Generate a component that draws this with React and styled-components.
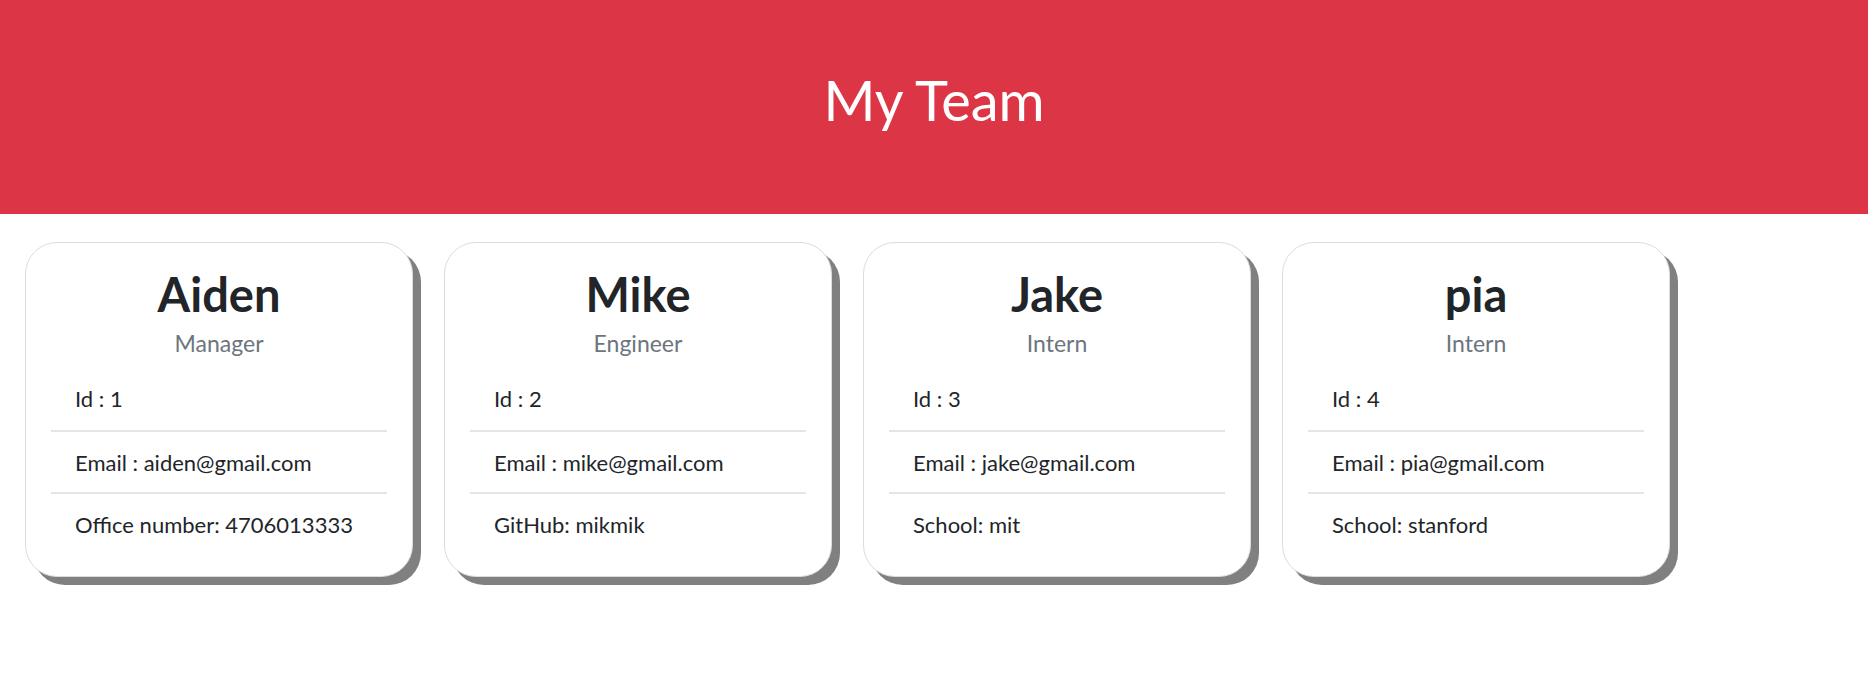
import React from "react";
import styled, { createGlobalStyle } from "styled-components";

const GlobalStyle = createGlobalStyle`
  * { box-sizing: border-box; }
  body {
    margin: 0;
    background: #ffffff;
    font-family: Lato, "Open Sans", sans-serif;
    color: #212529;
  }
`;

const Header = styled.header`
  height: 214px;
  background-color: #dc3545;
  display: flex;
  justify-content: center;
  padding-top: 66px;
`;

const Title = styled.h1`
  margin: 0;
  color: #ffffff;
  font-size: 56px;
  font-weight: 400;
  line-height: 68px;
  height: 68px;
`;

const Cards = styled.main`
  display: flex;
  gap: 31px;
  padding: 28px 25px;
`;

const Card = styled.div`
  width: 388px;
  border: 1px solid #dcdcdc;
  border-radius: 32px;
  box-shadow: 8px 8px 0 #808080;
  padding: 23px 25px 22px;
  background: #fff;
`;

const Name = styled.h2`
  margin: 0;
  text-align: center;
  font-size: 47px;
  font-weight: 700;
  line-height: 56px;
  color: #212529;
`;

const Role = styled.h3`
  margin: 6px 0 0;
  text-align: center;
  font-size: 23px;
  font-weight: 400;
  line-height: 30px;
  color: #6c757d;
`;

const List = styled.ul`
  list-style: none;
  margin: 10px 0 0;
  padding: 0;
`;

const Item = styled.li`
  height: 62px;
  line-height: 62px;
  padding: 0 24px;
  font-size: 22px;
  color: #212529;
  & + & {
    border-top: 2px solid #e3e5e8;
  }
`;

const team = [
  { name: "Aiden", role: "Manager", id: 1, email: "aiden@gmail.com", extra: "Office number: 4706013333" },
  { name: "Mike", role: "Engineer", id: 2, email: "mike@gmail.com", extra: "GitHub: mikmik" },
  { name: "Jake", role: "Intern", id: 3, email: "jake@gmail.com", extra: "School: mit" },
  { name: "pia", role: "Intern", id: 4, email: "pia@gmail.com", extra: "School: stanford" },
];

const App = () => {
  return (
    <>
      <GlobalStyle />
      <Header>
        <Title>My Team</Title>
      </Header>
      <Cards>
        {team.map((m) => (
          <Card key={m.id}>
            <Name>{m.name}</Name>
            <Role>{m.role}</Role>
            <List>
              <Item>Id : {m.id}</Item>
              <Item>Email : {m.email}</Item>
              <Item>{m.extra}</Item>
            </List>
          </Card>
        ))}
      </Cards>
    </>
  );
};

export default App;
